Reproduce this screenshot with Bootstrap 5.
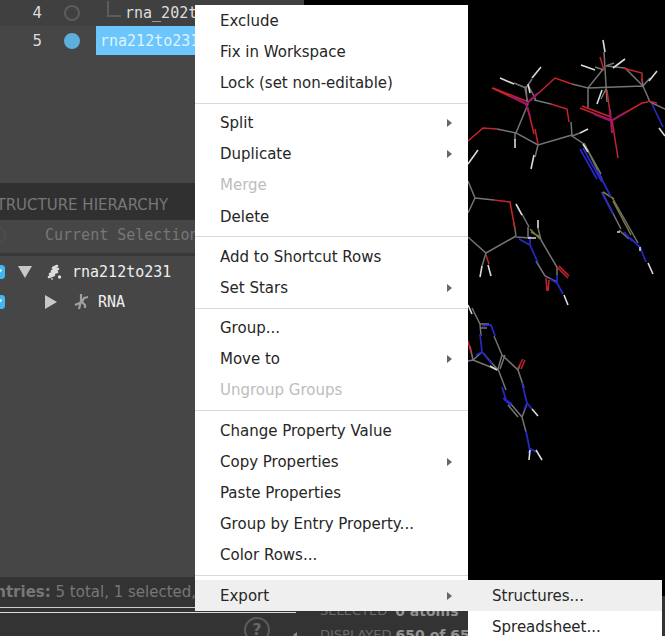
<!DOCTYPE html>
<html lang="en">
<head>
<meta charset="utf-8">
<meta name="viewport" content="width=device-width, initial-scale=1">
<title>Project entries</title>
<link href="https://cdn.jsdelivr.net/npm/bootstrap@5.3.0/dist/css/bootstrap.min.css" rel="stylesheet">
<style>
body{font-family:"DejaVu Sans",sans-serif;font-size:15px;line-height:20px;background:#000;color:#888}
.mono{font-family:"DejaVu Sans Mono",monospace}
.side{width:304px;background:#464646}
.entries{height:183px}
.entry{height:29px;color:#ddd}
.entry-tail{height:26px;background:#404040}
.entry-num{width:42px}
.entry-dot{width:16px;height:16px;margin-left:22px;border:2px solid #5c5c5c}
.entry-dot.on{background:#5db0dd;border-color:#5db0dd}
.entry-name{margin-left:16px}
.entry-name.picked{padding-left:4px;background:#6cc6fb;color:#dff3ff}
.branch{width:14px;height:16px;margin:0 4px 8px 11px;border-left:2px solid #5c5c5c;border-bottom:2px solid #5c5c5c}
.hier-head{height:37px;margin:0;padding-top:7px;background:#303030;color:#777;font-size:15px;line-height:20px;text-indent:-13px}
.cur-sel{height:36px;padding-bottom:3px;border-bottom:3px solid #383838;color:#777}
.cur-sel .mono{margin-left:39px}
.ring{width:16px;height:16px;margin-left:-10px;border:1px solid #525252}
.tree{padding-top:1px}
.tree-row{height:30px;color:#eee}
.tree-row .form-check-input{width:14px;height:14px;margin:0 0 0 -9px;background-color:#42b5f5;border-color:#42b5f5;border-radius:3px}
.caret{width:14px;height:14px;margin-left:13px;padding:0;border:0;background:none}
.caret-in{margin-left:39px}
.caret svg,.kind{display:block}
.kind{width:18px;height:18px;margin:0 8px 0 14px}
.status{height:30px;background:#333;color:#777}
.status span{margin-left:-15px}
.double-line{height:6px;background:linear-gradient(#ccc,#ccc) 0 0/296px 1px no-repeat,linear-gradient(#ddd,#ddd) 0 100%/296px 1px no-repeat,#333}
.foot{height:23px;background:#333}
.help{width:26px;height:26px;margin:4px 22px 0 0;padding:0;border:2px solid #5c5c5c;background:none;color:#666;font-size:16px;line-height:20px;font-weight:700}
.tick{width:8px;height:8px;margin-top:18px}
.info{height:40px;padding-left:16px;background:#333;color:#6a6a6a;font-size:13px;line-height:24px}
.info dl{margin:3px 0 0}
.info dt{font-weight:400}
.info dd{margin:0;color:#929292;font-size:14px;font-weight:700}
.ctx{left:195px;top:5px;bottom:25px;width:273px;z-index:2}
.ctx,.sub{background:#fff}
.menu-btn{padding:0 16px 0 25px;border:0;border-radius:0;color:#262626;font-size:15px;line-height:20px}
.menu-btn:disabled{border:0;color:#bdbdbd;opacity:1}
.menu-btn:hover,.menu-btn.open{background:#efefef;color:#262626}
.has-sub::after{content:"";border-left:5px solid #666;border-top:4px solid transparent;border-bottom:4px solid transparent}
.ctx hr{margin:4px 0;border-top:1px solid #d8d8d8;opacity:1}
.sub{left:468px;right:3px;top:580px;z-index:2}
.sub .menu-btn{height:31px;padding-left:24px}
</style>
<script src="https://cdn.jsdelivr.net/npm/bootstrap@5.3.0/dist/js/bootstrap.bundle.min.js"></script>
</head>
<body>
<div class="vh-100 d-flex position-relative overflow-hidden">
  <aside class="side d-flex flex-column flex-shrink-0 overflow-hidden">
    <div class="entries flex-shrink-0">
      <div class="entry entry-tail d-flex align-items-center"><span class="entry-num text-end">4</span><span class="entry-dot rounded-circle"></span><span class="entry-name mono d-flex align-items-center"><i class="branch"></i>rna_202t</span></div>
      <div class="entry d-flex align-items-center"><span class="entry-num text-end">5</span><span class="entry-dot on rounded-circle"></span><span class="entry-name picked mono flex-grow-1 h-100 d-flex align-items-center">rna212to231</span></div>
    </div>
    <h2 class="hier-head d-flex align-items-center fw-normal flex-shrink-0">STRUCTURE HIERARCHY</h2>
    <div class="cur-sel d-flex align-items-center flex-shrink-0"><span class="ring rounded-circle"></span><span class="mono">Current Selection</span></div>
    <div class="tree flex-grow-1">
      <div class="tree-row d-flex align-items-center">
        <input class="form-check-input flex-shrink-0" type="checkbox" checked aria-label="Show rna212to231">
        <button class="caret" aria-label="Collapse"><svg width="14" height="14"><path d="M0 1h14L7 13z" fill="#c8c8c8"/></svg></button>
        <svg class="kind" viewBox="0 0 18 18"><g stroke="#ddd" fill="none" stroke-linecap="round"><path stroke-width="2.600" d="M7 5l4-2M6 8l6-2M4 11l7-2M3 14l5-2"/><path stroke-width="1.500" d="M7 5l5 1M6 8l5 1M4 11l4 1"/></g><circle cx="13.500" cy="14" r="1.700" fill="#ddd"/><circle cx="6" cy="16" r="1" fill="#bbb"/></svg>
        <span class="mono">rna212to231</span>
      </div>
      <div class="tree-row d-flex align-items-center">
        <input class="form-check-input flex-shrink-0" type="checkbox" checked aria-label="Show RNA">
        <button class="caret caret-in" aria-label="Expand"><svg width="14" height="14"><path d="M1 0v14l12-7z" fill="#c8c8c8"/></svg></button>
        <svg class="kind" viewBox="0 0 18 18"><path d="M9 1v7l-2 8M16 4l-4 1-2 4-7 3M10 9l3 3v3" stroke="#a0a0a0" stroke-width="2.200" fill="none" stroke-linejoin="round"/></svg>
        <span class="mono">RNA</span>
      </div>
    </div>
    <div class="status d-flex align-items-center text-nowrap flex-shrink-0"><span><b>Entries:</b> 5 total, 1 selected,</span></div>
    <div class="double-line flex-shrink-0"></div>
    <div class="foot d-flex justify-content-end flex-shrink-0">
      <button class="help rounded-circle flex-shrink-0">?</button>
      <svg class="tick me-1" viewBox="0 0 8 8"><path d="M1 4l4-3v7z" fill="#888"/></svg>
    </div>
  </aside>
  <main class="d-flex flex-column flex-grow-1 overflow-hidden">
    <svg class="w-100 flex-grow-1" role="img" aria-label="Molecule">
      <g transform="translate(-304)" fill="none" stroke-width="1.500">
        <g stroke="#747474">
          <path d="M497 129l19 4M525 88l3 16-12 29 22 12 34-10M534 100l17 4M536 100l-8-15M526 86l1 16M571 122l1 14 12 8M515 132v8M538 145l-3 12M572 136l8-3M514 83l12 5 6-9M572 84l16 4 16-20M588 88v20M588 88l55-2M606 66l19 2 18 18M643 86l7 16M642 79l1 7 7-8M604 52l3 50M606 66l8-3M604 70l-9-3M607 87l-6 12M650 102l15 7"/>
          <path d="M468 181l7 17-7 15M475 198l19 2M468 237l18 16 30-17M516 236l-2-13M486 253l-4 13M516 237l14 1M528 227v10M541 240l17 29M536 261l9 15 12 6M557 267v8M541 240l-3-12M529 227l-7-13M584 143l18 36M602 192l19 37M613 199l25 44M619 230l10 9"/>
          <path d="M472 308l8 16h9M480 328h7M480 324l1 12M494 336l8 19-4 14 8 21M505 355l-5 14M502 355l16 15 6 18M482 352l-9 8-5 1M473 360l-3-14M473 360l25 10-15-17M510 403l12 14 5-13M508 405l10 12M522 417l4 15M518 370l2-5"/>
        </g>
        <g stroke="#7b7b43"><path d="M585 145l16 29M603 192l11 7M530 229l10 10M613 201l18 34M531 232l9 5"/></g>
        <g stroke="#c8232d">
          <path d="M468 141l15-13 14 1M551 104l16 5 2 13M530 101l25-23 17 6M526 104l-34-16M526 101l-33-13M527 105l7 29M535 129l3 15M623 68l19 5v9M600 57l4 13M611 120l-31-12M611 117l-29-11M612 120l6 38M607 90l4 31M611 121l31-18 6-1M648 101l9 2"/>
          <path d="M494 200l16 2 5 27M486 255l3 9M557 267l11 11M559 266l10 10M546 278l1 13M549 280l-1 11M518 368l5-9M521 369l4-9M468 341l3 12"/>
        </g>
        <g stroke="#a0176a" stroke-width="2"><path d="M511 96l15 8 12-11M526 104l4 12M594 114l17 7 15-9M610 109l2 24"/></g>
        <g stroke="#2828c8" stroke-width="1.700">
          <path d="M580 149l17 30M583 148l19 34M597 170l14 27M602 193l11 21M624 232l8 9M630 238l10 9 6 15M652 104l11 23"/>
          <path d="M519 239l11 6v-9M530 245l8 18M557 275v8l-7-4M557 283l6 11M482 326l9-1 4 11M480 334l2 18M482 352l10 12M476 355l6-3M502 387l4 13 6 4M503 398l8 8M522 383l5 20M527 403l-3 7M527 403l5 6M526 431l4 20M528 453l3-4 5 3"/>
        </g>
        <g stroke="#dadada" stroke-width="1.600">
          <path d="M500 78l14 6M541 67l-9 11M528 84l2 9M515 139v9M534 155l-3 14M580 133l8-4M583 144l5 8M478 150l-10 14M603 40l2 12M581 65l14 5M625 59l-12 9M602 90l-5 14M657 71l-8 10M659 128l6 8"/>
          <path d="M516 204l6 11M538 220v8M528 238h8M482 266l-2 11M488 265l3 11M564 295l4 10M617 232h3M640 247v4M648 263l5 11M468 305l4 9M490 366l7 4M532 409l6 7M530 450l-1 10M536 450l6 10"/>
        </g>
      </g>
    </svg>
    <div class="info flex-shrink-0 text-nowrap overflow-hidden">
      <dl>
        <div class="d-flex gap-2"><dt>SELECTED</dt><dd>0 atoms</dd></div>
        <div class="d-flex gap-1"><dt>DISPLAYED</dt><dd>650 of 65</dd></div>
      </dl>
    </div>
  </main>

  <div class="ctx position-absolute d-flex flex-column" role="menu">
    <button class="btn menu-btn flex-fill text-start" role="menuitem">Exclude</button>
    <button class="btn menu-btn flex-fill text-start" role="menuitem">Fix in Workspace</button>
    <button class="btn menu-btn flex-fill text-start" role="menuitem">Lock (set non-editable)</button>
    <hr>
    <button class="btn menu-btn has-sub flex-fill d-flex align-items-center justify-content-between" role="menuitem">Split</button>
    <button class="btn menu-btn has-sub flex-fill d-flex align-items-center justify-content-between" role="menuitem">Duplicate</button>
    <button class="btn menu-btn flex-fill text-start" role="menuitem" disabled>Merge</button>
    <button class="btn menu-btn flex-fill text-start" role="menuitem">Delete</button>
    <hr>
    <button class="btn menu-btn flex-fill text-start" role="menuitem">Add to Shortcut Rows</button>
    <button class="btn menu-btn has-sub flex-fill d-flex align-items-center justify-content-between" role="menuitem">Set Stars</button>
    <hr>
    <button class="btn menu-btn flex-fill text-start" role="menuitem">Group...</button>
    <button class="btn menu-btn has-sub flex-fill d-flex align-items-center justify-content-between" role="menuitem">Move to</button>
    <button class="btn menu-btn flex-fill text-start" role="menuitem" disabled>Ungroup Groups</button>
    <hr>
    <button class="btn menu-btn flex-fill text-start" role="menuitem">Change Property Value</button>
    <button class="btn menu-btn has-sub flex-fill d-flex align-items-center justify-content-between" role="menuitem">Copy Properties</button>
    <button class="btn menu-btn flex-fill text-start" role="menuitem">Paste Properties</button>
    <button class="btn menu-btn flex-fill text-start" role="menuitem">Group by Entry Property...</button>
    <button class="btn menu-btn flex-fill text-start" role="menuitem">Color Rows...</button>
    <hr>
    <button class="btn menu-btn open has-sub flex-fill d-flex align-items-center justify-content-between" role="menuitem">Export</button>
  </div>
  <div class="sub position-absolute d-flex flex-column" role="menu">
    <button class="btn menu-btn open text-start" role="menuitem">Structures...</button>
    <button class="btn menu-btn text-start" role="menuitem">Spreadsheet...</button>
  </div>
</div>
</body>
</html>
